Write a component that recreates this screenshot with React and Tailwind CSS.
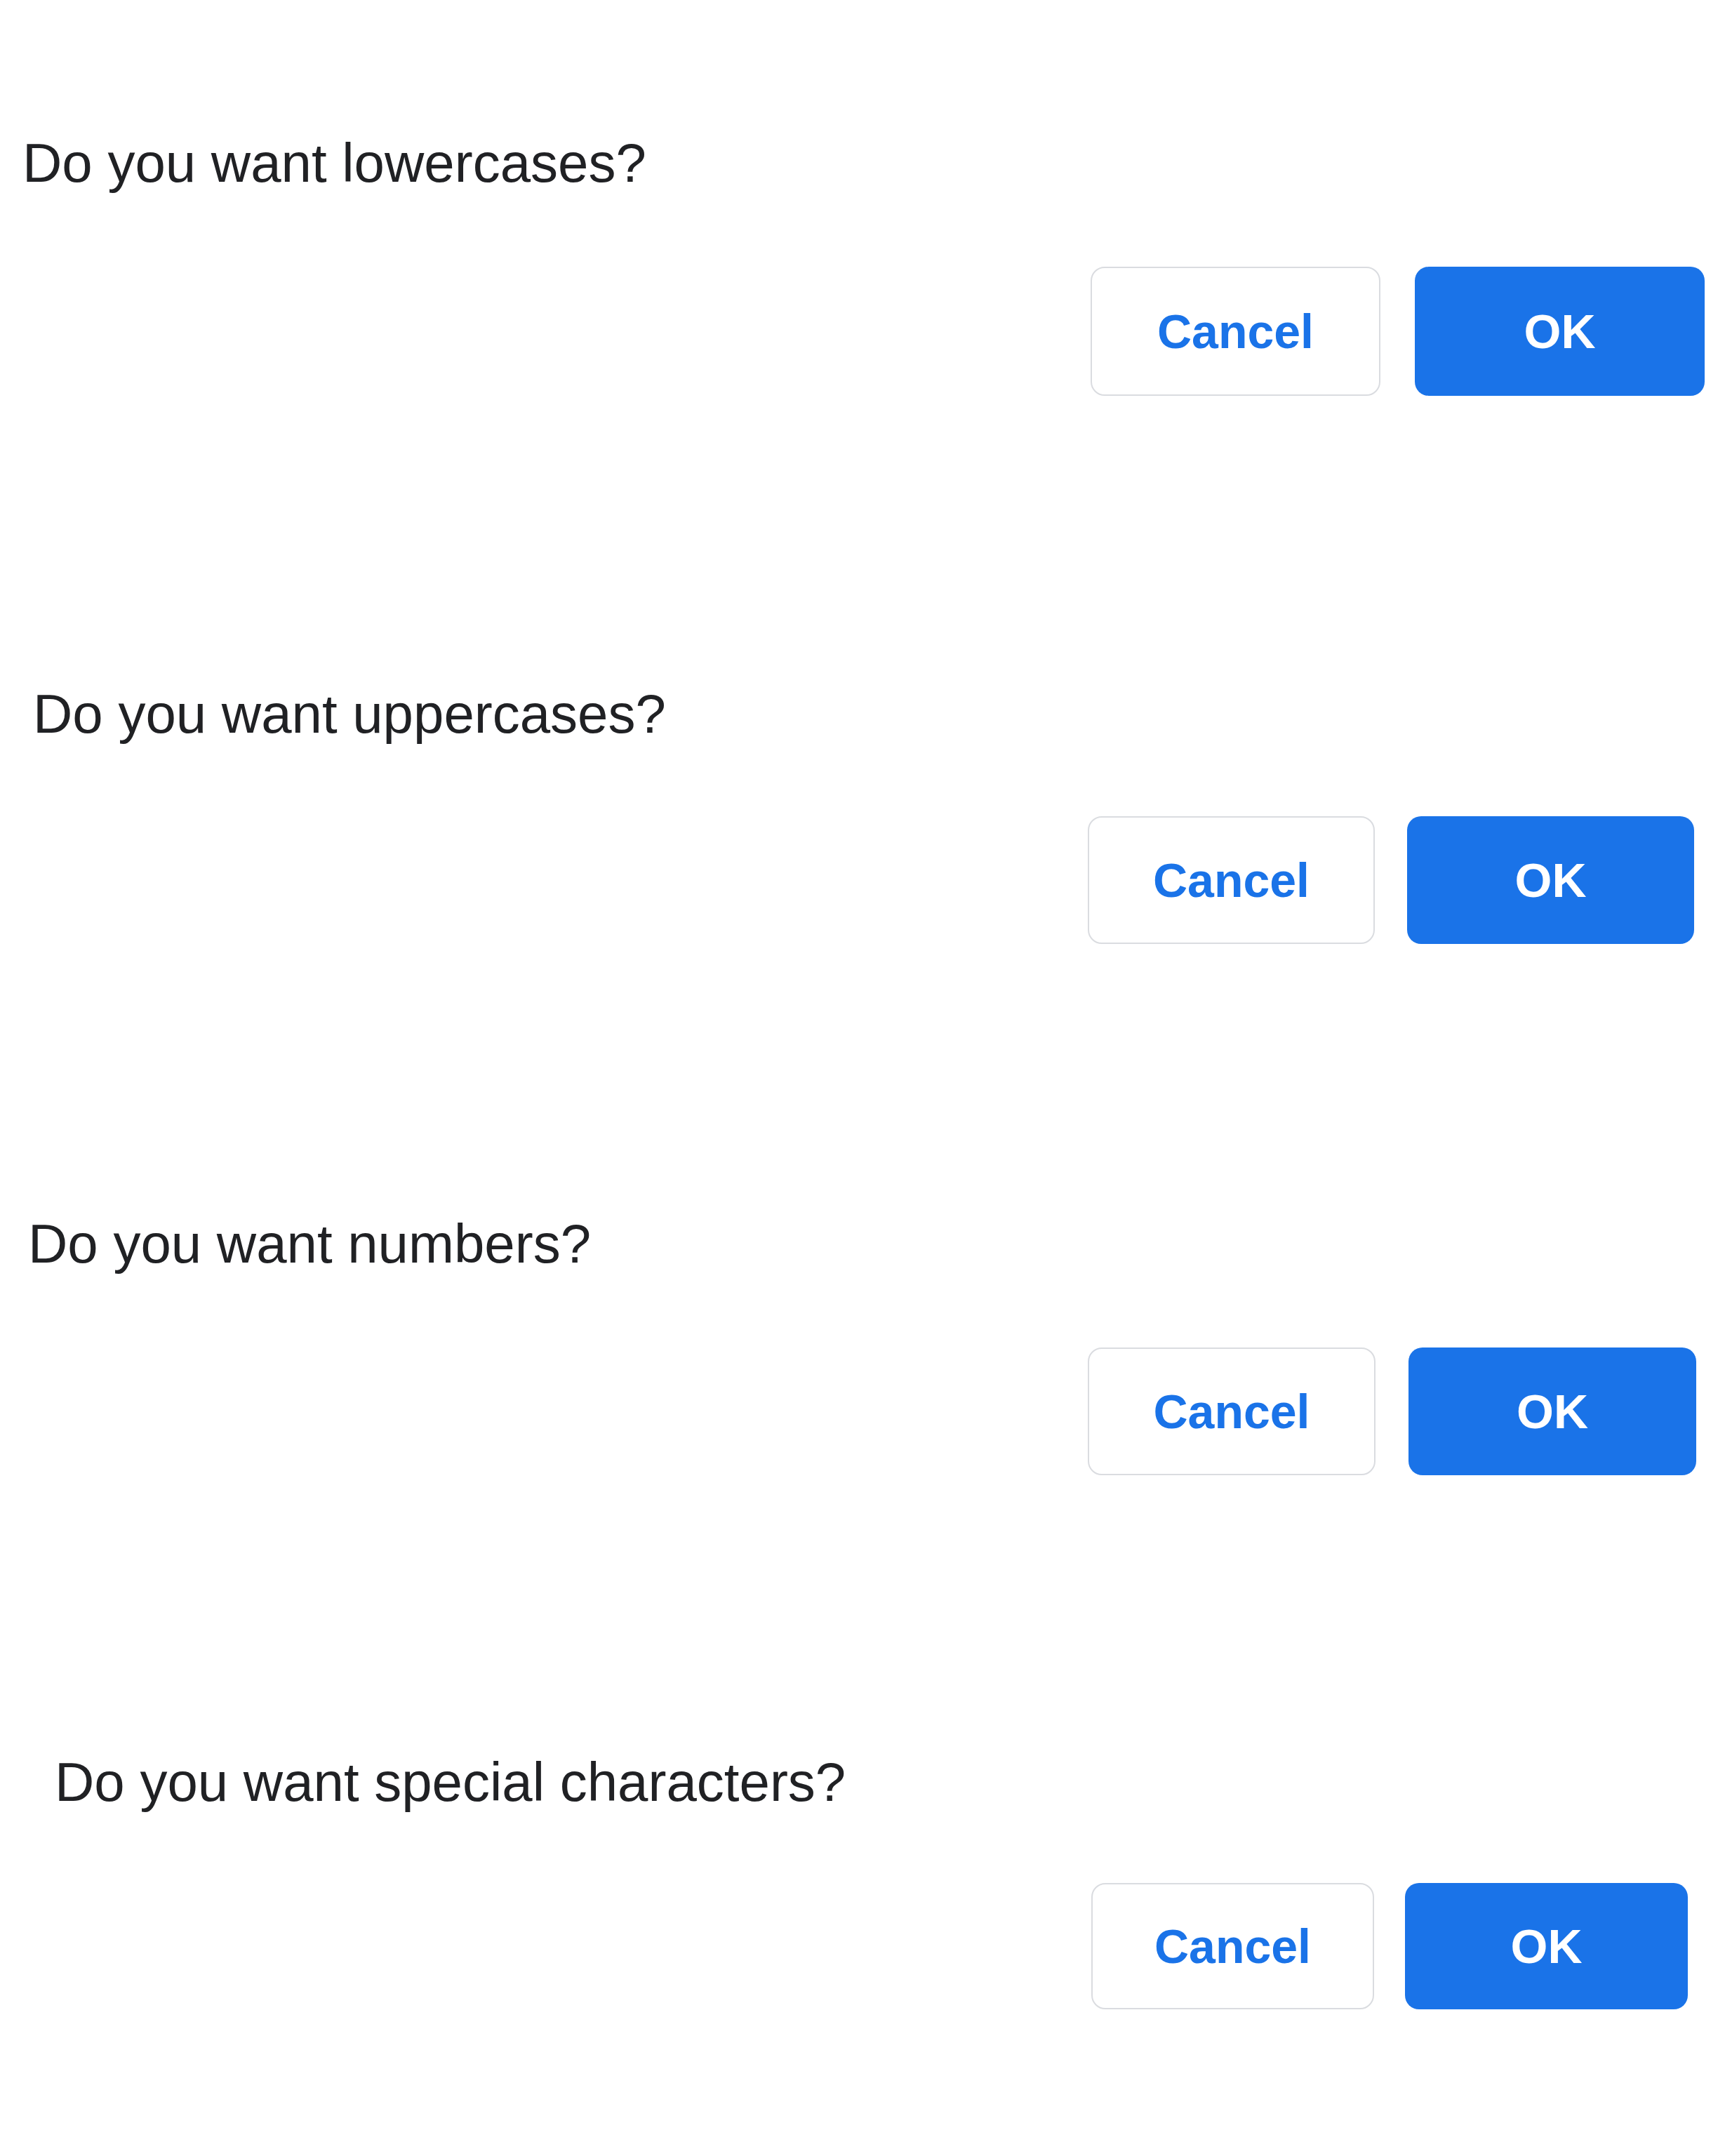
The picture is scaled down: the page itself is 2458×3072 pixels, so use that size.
// Four stacked confirm prompts, each with Cancel / OK actions.

const PROMPTS = [
  {
    question: 'Do you want lowercases?',
    wrap: 'pt-[187px]',
    text: 'pl-[32px]',
    row: 'mt-[103px] pr-[29px] gap-[49px]',
    btn: 'w-[413px] h-[184px]',
  },
  {
    question: 'Do you want uppercases?',
    wrap: 'pt-[408px]',
    text: 'pl-[47px]',
    row: 'mt-[101px] pr-[44px] gap-[46px]',
    btn: 'w-[409px] h-[182px]',
  },
  {
    question: 'Do you want numbers?',
    wrap: 'pt-[382px]',
    text: 'pl-[40px]',
    row: 'mt-[103px] pr-[41px] gap-[47px]',
    btn: 'w-[410px] h-[182px]',
  },
  {
    question: 'Do you want special characters?',
    wrap: 'pt-[392px]',
    text: 'pl-[78px]',
    row: 'mt-[99px] pr-[53px] gap-[44px]',
    btn: 'w-[403px] h-[180px]',
  },
];

function Prompt({ question, wrap, text, row, btn }) {
  return (
    <section className={wrap}>
      <p className={`${text} text-[78px] leading-[90px] text-[#202124]`}>{question}</p>
      <div className={`flex justify-end ${row}`}>
        <button
          type="button"
          className={`${btn} flex items-center justify-center rounded-[20px] border-2 border-[#dadce0] bg-white text-[68px] font-bold text-[#1a73e8]`}
        >
          Cancel
        </button>
        <button
          type="button"
          className={`${btn} flex items-center justify-center rounded-[20px] bg-[#1a73e8] text-[68px] font-bold text-white`}
        >
          OK
        </button>
      </div>
    </section>
  );
}

export default function App() {
  return (
    <div className="min-h-[3072px] w-[2458px] bg-white font-['Liberation_Sans',Arial,sans-serif]">
      {PROMPTS.map((p) => (
        <Prompt key={p.question} {...p} />
      ))}
    </div>
  );
}
